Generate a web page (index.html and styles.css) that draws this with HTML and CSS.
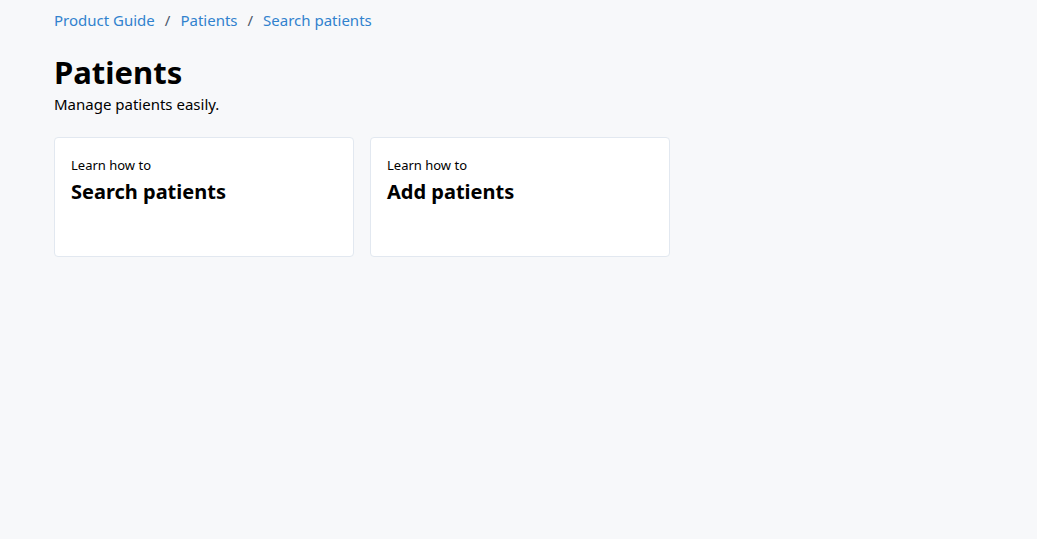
FILE: index.html
```html
<!DOCTYPE html>
<html lang="en">
<head>
<meta charset="utf-8">
<title>Patients</title>
<link rel="stylesheet" href="styles.css">
</head>
<body>
<main class="page">
  <nav class="breadcrumb">
    <a href="#">Product Guide</a>
    <span class="sep">/</span>
    <a href="#">Patients</a>
    <span class="sep">/</span>
    <a href="#">Search patients</a>
  </nav>
  <header class="header">
    <h1 class="title">Patients</h1>
    <p class="subtitle">Manage patients easily.</p>
  </header>
  <section class="cards">
    <a class="card" href="#">
      <span class="card-eyebrow">Learn how to</span>
      <span class="card-title">Search patients</span>
    </a>
    <a class="card" href="#">
      <span class="card-eyebrow">Learn how to</span>
      <span class="card-title">Add patients</span>
    </a>
  </section>
</main>
</body>
</html>
```
FILE: styles.css
```css
html, body {
  margin: 0;
  padding: 0;
  background: #f7f8fa;
  color: #000;
  font-family: "Noto Sans", "Open Sans", sans-serif;
}
.page {
  padding: 8px 54px;
}
.breadcrumb {
  display: flex;
  align-items: center;
  gap: 10px;
  font-size: 15px;
  line-height: 24px;
}
.breadcrumb a {
  color: #3182ce;
  text-decoration: none;
}
.sep {
  color: #4a5568;
}
.header {
  margin-top: 20px;
}
.title {
  margin: 0;
  font-size: 31px;
  font-weight: 700;
  line-height: 40px;
}
.subtitle {
  margin: 2px 0 0;
  font-size: 15px;
  line-height: 20px;
}
.cards {
  display: flex;
  gap: 16px;
  margin-top: 23px;
}
.card {
  box-sizing: border-box;
  width: 300px;
  height: 120px;
  background: #fff;
  border: 1px solid #e2e8f0;
  border-radius: 4px;
  padding: 18px 16px;
  display: flex;
  flex-direction: column;
  text-decoration: none;
  color: #000;
}
.card-eyebrow {
  font-size: 13px;
  line-height: 18px;
}
.card-title {
  font-size: 20px;
  font-weight: 700;
  line-height: 28px;
  margin-top: 4px;
}
```
